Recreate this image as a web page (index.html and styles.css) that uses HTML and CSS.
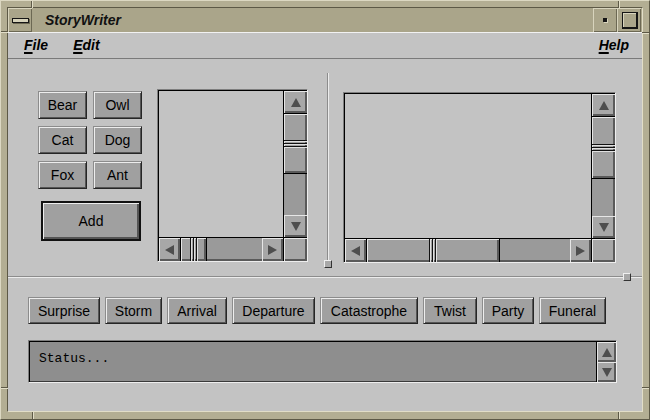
FILE: index.html
```html
<!DOCTYPE html>
<html>
<head>
<meta charset="utf-8">
<title>StoryWriter</title>
<link rel="stylesheet" href="styles.css">
</head>
<body>
<div class="win">
  <span class="notch nv n-t1"></span>
  <span class="notch nv n-t2"></span>
  <span class="notch nv n-b1"></span>
  <span class="notch nv n-b2"></span>
  <span class="notch nh n-l1"></span>
  <span class="notch nh n-l2"></span>
  <span class="notch nh n-r1"></span>
  <span class="notch nh n-r2"></span>
  <div class="inner">
    <div class="titlebar">
      <div class="tbtn"><span class="menu-ico"></span></div>
      <div class="title">StoryWriter</div>
      <div class="tbtn"><span class="dot"></span></div>
      <div class="tbtn"><span class="maxi"></span></div>
    </div>
    <div class="menubar">
      <span class="mi"><u>F</u>ile</span>
      <span class="mi"><u>E</u>dit</span>
      <span class="mi help"><u>H</u>elp</span>
    </div>
    <div class="client">
      <div class="top">
        <div class="animals">
          <div class="agrid">
            <button class="btn">Bear</button>
            <button class="btn">Owl</button>
            <button class="btn">Cat</button>
            <button class="btn">Dog</button>
            <button class="btn">Fox</button>
            <button class="btn">Ant</button>
          </div>
          <button class="btn add">Add</button>
        </div>

        <div class="list list-s">
          <div class="content"></div>
          <div class="vsb">
            <div class="arrow av"><svg width="10" height="9" viewBox="0 0 10 9"><polygon points="5,0 10,9 0,9" fill="#4e4e4e"/></svg></div>
            <div class="thumb tv ts-v"><div class="grip-h"></div></div>
            <div class="trough tr-v"></div>
            <div class="arrow av"><svg width="10" height="9" viewBox="0 0 10 9"><polygon points="0,0 10,0 5,9" fill="#4e4e4e"/></svg></div>
          </div>
          <div class="hsb">
            <div class="arrow ah"><svg width="9" height="10" viewBox="0 0 9 10"><polygon points="0,5 9,0 9,10" fill="#4e4e4e"/></svg></div>
            <div class="thumb th ts-h"><div class="grip-v"></div></div>
            <div class="trough tr-h"></div>
            <div class="arrow ah"><svg width="9" height="10" viewBox="0 0 9 10"><polygon points="0,0 9,5 0,10" fill="#4e4e4e"/></svg></div>
          </div>
          <div class="corner"></div>
        </div>

        <div class="vsep"><div class="vline"></div><div class="sash"></div></div>

        <div class="list list-b">
          <div class="content"></div>
          <div class="vsb">
            <div class="arrow av"><svg width="10" height="9" viewBox="0 0 10 9"><polygon points="5,0 10,9 0,9" fill="#4e4e4e"/></svg></div>
            <div class="thumb tv tb-v"><div class="grip-h"></div></div>
            <div class="trough tr-v"></div>
            <div class="arrow av"><svg width="10" height="9" viewBox="0 0 10 9"><polygon points="0,0 10,0 5,9" fill="#4e4e4e"/></svg></div>
          </div>
          <div class="hsb">
            <div class="arrow ah"><svg width="9" height="10" viewBox="0 0 9 10"><polygon points="0,5 9,0 9,10" fill="#4e4e4e"/></svg></div>
            <div class="thumb th tb-h"><div class="grip-v"></div></div>
            <div class="trough tr-h"></div>
            <div class="arrow ah"><svg width="9" height="10" viewBox="0 0 9 10"><polygon points="0,0 9,5 0,10" fill="#4e4e4e"/></svg></div>
          </div>
          <div class="corner"></div>
        </div>
      </div>

      <div class="hsep"><div class="sash hsash"></div></div>

      <div class="bottom">
        <div class="actions">
          <button class="btn w-surprise">Surprise</button>
          <button class="btn w-storm">Storm</button>
          <button class="btn w-arrival">Arrival</button>
          <button class="btn w-departure">Departure</button>
          <button class="btn w-catastrophe">Catastrophe</button>
          <button class="btn w-twist">Twist</button>
          <button class="btn w-party">Party</button>
          <button class="btn w-funeral">Funeral</button>
        </div>
        <div class="status">
          <div class="status-text">Status...</div>
          <div class="status-sb">
            <div class="arrow as"><svg width="10" height="9" viewBox="0 0 10 9"><polygon points="5,0 10,9 0,9" fill="#4e4e4e"/></svg></div>
            <div class="arrow as"><svg width="10" height="9" viewBox="0 0 10 9"><polygon points="0,0 10,0 5,9" fill="#4e4e4e"/></svg></div>
          </div>
        </div>
      </div>
    </div>
  </div>
</div>
</body>
</html>
```

FILE: styles.css
```css
* { box-sizing: border-box; }
html, body { margin: 0; padding: 0; background: #b3ae93; }
body {
  width: 650px; height: 420px; overflow: hidden;
  font-family: "Liberation Sans", Arial, sans-serif;
}

/* window frame */
.win {
  position: relative;
  width: 650px; height: 420px;
  background: #b3ae93;
  border: 1px solid;
  border-color: #dcd8c2 #5d5946 #5d5946 #dcd8c2;
  padding: 6px 6px 7px 6px;
}
.notch { position: absolute; }
.nv { width: 2px; height: 7px; background: linear-gradient(to right, #5d5946 0 1px, #e2dec8 1px 2px); }
.nh { width: 7px; height: 2px; background: linear-gradient(to bottom, #5d5946 0 1px, #e2dec8 1px 2px); }
.n-t1 { left: 30px; top: 0; }
.n-t2 { left: 617px; top: 0; }
.n-b1 { left: 31px; bottom: 0; }
.n-b2 { left: 617px; bottom: 0; }
.n-l1 { left: 0; top: 30px; }
.n-l2 { left: 0; top: 386px; }
.n-r1 { right: 0; top: 31px; }
.n-r2 { right: 0; top: 386px; }

.inner {
  height: 100%;
  display: flex; flex-direction: column;
  border: 1px solid;
  border-color: #5d5946 #e2dec8 #e2dec8 #5d5946;
  background: #c3c3c3;
}

/* title bar */
.titlebar {
  height: 24px; flex: none;
  display: flex;
  background: #aaa58a;
  padding-right: 1px;
}
.tbtn {
  width: 24px; height: 24px; flex: none;
  display: flex; align-items: center; justify-content: center;
  box-shadow: inset 1px 1px 0 #d8d4bd, inset -1px -1px 0 #6c6853;
}
.menu-ico {
  width: 17px; height: 5px;
  border: 1px solid #151515;
  background: #d6d2ba;
  box-shadow: 1px 1px 0 #6c6853;
}
.dot {
  width: 4px; height: 4px;
  background: #151515;
  box-shadow: 1px 1px 0 #d8d4bd;
}
.maxi {
  width: 16px; height: 17px;
  border: 1px solid #151515;
  border-right-width: 2px; border-bottom-width: 2px;
  box-shadow: inset 1px 1px 0 #d8d4bd;
  margin-left: 1px;
}
.title {
  flex: 1;
  display: flex; align-items: center;
  padding-left: 13px;
  font-weight: bold; font-style: italic; font-size: 14px;
  color: #111;
}

/* menu bar */
.menubar {
  height: 27px; flex: none;
  display: flex; align-items: center; gap: 25px;
  padding: 0 13px 1px 16px;
  border-top: 1px solid #f2f2f2;
  border-bottom: 1px solid #7a7a7a;
  font-weight: bold; font-style: italic; font-size: 14px;
  color: #000;
}
.mi u { text-decoration-thickness: 2px; text-underline-offset: 2px; }
.help { margin-left: auto; }

/* client */
.client { flex: 1; display: flex; flex-direction: column; }
.top {
  height: 217px; flex: none;
  display: flex; align-items: flex-start;
  padding-left: 30px;
}

.btn {
  font-family: "Liberation Sans", Arial, sans-serif;
  font-size: 14px; color: #000;
  background: #a0a0a0;
  padding: 0;
  border: 1px solid;
  border-color: #8c8c8c #262626 #262626 #8c8c8c;
  box-shadow: inset 1px 1px 0 #ededed, inset -1px -1px 0 #555;
  cursor: default;
}

.animals { width: 104px; margin-top: 32px; }
.agrid {
  display: grid;
  grid-template-columns: 49px 49px;
  grid-auto-rows: 28px;
  column-gap: 6px; row-gap: 7px;
}
.add {
  display: block;
  width: 100px; height: 40px;
  margin: 12px 0 0 3px;
  border: 2px solid #111;
  box-shadow: inset 1px 1px 0 #ededed, inset -2px -2px 0 #555;
}

/* scrolled lists */
.list {
  display: grid;
  grid-template-columns: 1fr 23px;
  grid-template-rows: 1fr 23px;
  gap: 1px;
  padding: 1px 0 0 1px;
  background: #000;
  border: 1px solid;
  border-color: #7e7e7e #eeeeee #eeeeee #7e7e7e;
}
.list-s { width: 151px; height: 173px; margin: 30px 0 0 15px; }
.list-b { width: 273px; height: 171px; margin: 33px 0 0 11px; }
.content { background: #c3c3c3; }

.vsb { display: flex; flex-direction: column; background: #9a9a9a; }
.hsb { display: flex; background: #9a9a9a; }
.arrow {
  flex: none;
  display: flex; align-items: center; justify-content: center;
  background: #a7a7a7;
  box-shadow: inset 1px 1px 0 #e6e6e6, inset -2px -2px 0 #5a5a5a;
}
.av { height: 22px; }
.ah { width: 21px; }
.as { height: 20px; }
.thumb {
  flex: none;
  display: flex; align-items: center; justify-content: center;
  background: #a0a0a0;
  box-shadow: inset 1px 1px 0 #e6e6e6, inset -2px -2px 0 #5a5a5a;
}
.tv { border-top: 1px solid #000; }
.th { border-left: 1px solid #000; }
.ts-v { height: 60px; }
.tb-v { height: 62px; }
.ts-h { width: 26px; }
.tb-h { width: 133px; }
.trough { flex: 1; }
.tr-v { border-top: 1px solid #000; box-shadow: inset -2px 0 0 #5a5a5a; }
.tr-h { border-left: 1px solid #000; box-shadow: inset 0 -2px 0 #5a5a5a; }
.grip-h {
  width: 100%; height: 8px;
  background: linear-gradient(to bottom,
    #111 0 1px, #e0e0e0 1px 2px, transparent 2px 3px,
    #111 3px 4px, #e0e0e0 4px 5px, transparent 5px 6px,
    #111 6px 7px, #e0e0e0 7px 8px);
}
.grip-v {
  width: 8px; height: 100%;
  background: linear-gradient(to right,
    #111 0 1px, #e0e0e0 1px 2px, transparent 2px 3px,
    #111 3px 4px, #e0e0e0 4px 5px, transparent 5px 6px,
    #111 6px 7px, #e0e0e0 7px 8px);
}
.corner {
  background: #a7a7a7;
  box-shadow: inset 1px 1px 0 #e6e6e6, inset -2px -2px 0 #5a5a5a;
}

/* separators */
.vsep {
  width: 8px; height: 195px;
  margin: 14px 0 0 16px;
  display: flex; flex-direction: column; align-items: center;
}
.vline { flex: 1; width: 2px; border-left: 1px solid #8c8c8c; border-right: 1px solid #ececec; }
.sash {
  width: 8px; height: 8px; flex: none;
  background: #a8a8a8;
  border: 1px solid;
  border-color: #f0f0f0 #333 #333 #f0f0f0;
}
.hsep {
  position: relative;
  height: 2px; flex: none;
  border-top: 1px solid #8c8c8c;
  border-bottom: 1px solid #ececec;
}
.hsash { position: absolute; left: 615px; top: -4px; }

/* bottom */
.bottom { padding: 19px 0 0 20px; }
.actions { display: flex; gap: 5px; height: 27px; }
.w-surprise { width: 72px; }
.w-storm { width: 57px; }
.w-arrival { width: 60px; }
.w-departure { width: 83px; }
.w-catastrophe { width: 98px; }
.w-twist { width: 54px; }
.w-party { width: 52px; }
.w-funeral { width: 67px; }
.status {
  display: flex;
  width: 589px; height: 43px;
  margin-top: 16px;
  gap: 1px;
  padding: 1px 0 0 1px;
  background: #000;
  border: 1px solid;
  border-color: #7e7e7e #eeeeee #eeeeee #7e7e7e;
}
.status-text {
  flex: 1;
  background: #8e8e8e;
  font-family: "Liberation Mono", "Courier New", monospace;
  font-size: 13px; line-height: 15px;
  color: #000;
  padding: 9px 0 0 9px;
  box-shadow: inset 0 -1px 0 #3a3a3a;
}
.status-sb { width: 19px; display: flex; flex-direction: column; background: #9a9a9a; }
```
